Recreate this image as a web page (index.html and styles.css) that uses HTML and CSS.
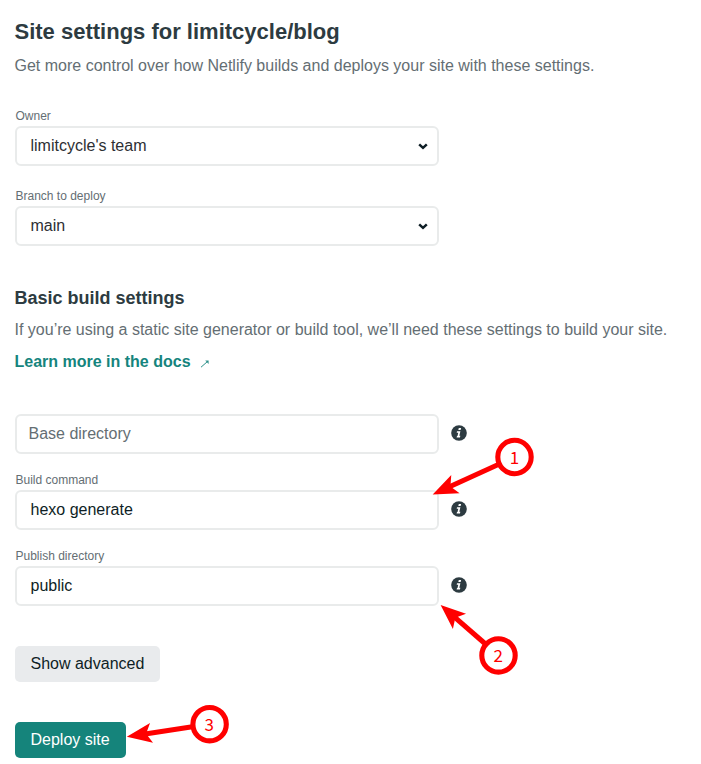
FILE: index.html
```html
<!DOCTYPE html>
<html lang="en">
<head>
<meta charset="utf-8">
<title>Site settings</title>
<link rel="stylesheet" href="styles.css">
</head>
<body>
<svg class="symbols" aria-hidden="true">
  <symbol id="info" viewBox="0 0 16 16">
    <circle cx="8" cy="8" r="7.8" fill="#2d3b41"/>
    <path d="M7.8 3h2.3l-.5 2.1H7.3zM6 6.2h3.4l-1.1 4.6h1l-.3 1.6H5.6l.4-1.5h.5l.8-3.2H5.7z" fill="#fff"/>
  </symbol>
  <symbol id="chevron" viewBox="0 0 10 7">
    <path d="M1.2 1.3L5 4.8l3.8-3.5" fill="none" stroke="#0e1e25" stroke-width="2.5"/>
  </symbol>
</svg>
<main class="page">
  <header class="intro">
    <h1>Site settings for limitcycle/blog</h1>
    <p>Get more control over how Netlify builds and deploys your site with these settings.</p>
  </header>
  <section class="fields">
    <div class="field">
      <span class="label">Owner</span>
      <div class="control select">limitcycle's team<svg class="chevron"><use href="#chevron"/></svg></div>
    </div>
    <div class="field">
      <span class="label">Branch to deploy</span>
      <div class="control select">main<svg class="chevron"><use href="#chevron"/></svg></div>
    </div>
  </section>
  <section class="build">
    <h2>Basic build settings</h2>
    <p>If you’re using a static site generator or build tool, we’ll need these settings to build your site.</p>
    <a class="docs">Learn more in the docs<svg class="external" viewBox="0 0 10 10"><path d="M1 8.2L7.5 2.5" stroke="#15847d" stroke-width=".9"/><path d="M5.2 1.5h3.4v3.4z" fill="#15847d" opacity=".85"/></svg></a>
  </section>
  <section class="inputs">
    <div class="row">
      <div class="control placeholder">Base directory</div>
      <svg class="info"><use href="#info"/></svg>
    </div>
    <div class="field">
      <span class="label">Build command</span>
      <div class="row">
        <div class="control">hexo generate</div>
        <svg class="info"><use href="#info"/></svg>
      </div>
    </div>
    <div class="field">
      <span class="label">Publish directory</span>
      <div class="row">
        <div class="control">public</div>
        <svg class="info"><use href="#info"/></svg>
      </div>
    </div>
  </section>
  <div class="actions">
    <button class="button secondary">Show advanced</button>
    <button class="button primary">Deploy site</button>
  </div>
</main>
<svg class="annotations" viewBox="0 0 701 764">
  <defs>
    <path id="head" d="M0 0L25-10L19.5 0L25 10z"/>
  </defs>
  <g transform="translate(432.7 494.5) rotate(-24.6)"><use href="#head"/><path class="line" d="M18.5 0H74"/></g>
  <g transform="translate(440.6 605) rotate(41)"><use href="#head"/><path class="line" d="M18.5 0H61"/></g>
  <g transform="translate(126.8 736.7) rotate(-8.55)"><use href="#head"/><path class="line" d="M18.5 0H68"/></g>
  <circle cx="514.5" cy="457" r="16.7"/>
  <circle cx="498.5" cy="655.4" r="16.7"/>
  <circle cx="209.6" cy="724.2" r="16.7"/>
  <text x="514.4" y="464">1</text>
  <text x="498.2" y="662">2</text>
  <text x="209.3" y="731">3</text>
</svg>
</body>
</html>
```

FILE: styles.css
```css
* {
  box-sizing: border-box;
}

body {
  margin: 0;
  background: #fff;
  color: #2d3b41;
  font: 16px/24px "Liberation Sans", sans-serif;
}

.symbols {
  display: none;
}

.page {
  padding: 18px 0 0 15px;
  height: 764px;
}

h1,
h2,
p {
  margin: 0 0 0 -0.5px;
}

h1 {
  font-size: 22px;
  line-height: 28px;
}

h2 {
  font-size: 18px;
  line-height: 24px;
}

p {
  color: #646e73;
}

.intro p {
  margin-top: 8px;
}

.fields {
  display: grid;
  gap: 24px;
  margin-top: 32px;
}

.field {
  display: flex;
  flex-direction: column;
}

.label {
  height: 16px;
  padding-left: 0.5px;
  font-size: 12px;
  line-height: 12px;
  color: #646e73;
}

.control {
  display: flex;
  align-items: center;
  width: 424px;
  height: 40px;
  padding: 0 9px 0 13.5px;
  border: 2px solid #e9ebeb;
  border-radius: 6px;
  color: #0e1e25;
}

.select {
  justify-content: space-between;
  color: #2d2f33;
}

.placeholder {
  padding-left: 11.5px;
  color: #646e73;
}

.chevron {
  width: 10px;
  height: 7px;
}

.build {
  margin-top: 40px;
}

.build p {
  margin-top: 8px;
}

.docs {
  display: flex;
  align-items: center;
  gap: 9px;
  margin: 8px 0 0 -0.5px;
  color: #15847d;
  font-weight: bold;
}

.external {
  width: 10px;
  height: 10px;
  margin-top: 4px;
}

.inputs {
  display: grid;
  gap: 20px;
  margin-top: 40px;
}

.row {
  display: flex;
  gap: 12px;
}

.info {
  width: 16px;
  height: 16px;
  margin-top: 11px;
}

.actions {
  display: flex;
  flex-direction: column;
  align-items: flex-start;
  gap: 40px;
  margin-top: 40px;
}

.button {
  height: 36px;
  padding: 0 15.5px;
  border: 0;
  border-radius: 5px;
  font: inherit;
}

.secondary {
  background: #e9ebed;
  color: #0e1e25;
}

.primary {
  padding-right: 16.2px;
  background: #15847b;
  color: #fff;
}

.annotations {
  position: absolute;
  inset: 0;
  width: 701px;
  height: 764px;
  fill: #f00;
}

.annotations .line {
  stroke: #f00;
  stroke-width: 5.1;
}

.annotations circle {
  fill: #fff;
  stroke: #f00;
  stroke-width: 5.1;
}

.annotations text {
  font: 400 17px "Noto Sans CJK SC", sans-serif;
  text-anchor: middle;
}
```
